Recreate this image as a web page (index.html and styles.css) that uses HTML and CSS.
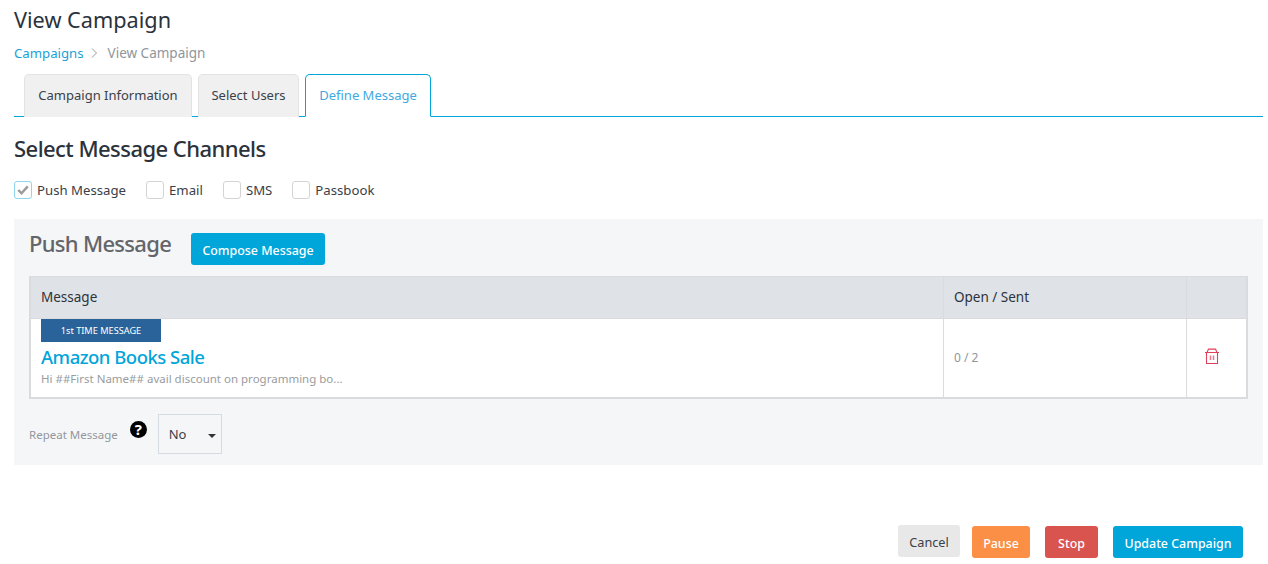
FILE: index.html
```html
<!DOCTYPE html>
<html lang="en">
<head>
<meta charset="utf-8">
<title>View Campaign</title>
<link rel="stylesheet" href="styles.css">
</head>
<body>
<div class="page">
  <h1 class="title">View Campaign</h1>
  <nav class="crumbs">
    <a class="crumb-link">Campaigns</a>
    <svg class="crumb-sep" width="7" height="10" viewBox="0 0 7 10"><path d="M1 .5 5.5 5 1 9.5" fill="none" stroke="#999" stroke-width="1"/></svg>
    <span class="crumb-current">View Campaign</span>
  </nav>
  <div class="tabs">
    <div class="tab tab-info">Campaign Information</div>
    <div class="tab tab-users">Select Users</div>
    <div class="tab tab-active">Define Message</div>
  </div>
  <h2 class="section-title">Select Message Channels</h2>
  <div class="channels">
    <label class="channel"><span class="box box-on"><svg width="12" height="10" viewBox="0 0 12 10"><path d="M1.2 5 4.5 8.2 10.8 1.4" fill="none" stroke="#9a9a9a" stroke-width="2.4"/></svg></span>Push Message</label>
    <label class="channel"><span class="box"></span>Email</label>
    <label class="channel"><span class="box"></span>SMS</label>
    <label class="channel"><span class="box"></span>Passbook</label>
  </div>
  <section class="panel">
    <div class="panel-head">
      <h3 class="panel-title">Push Message</h3>
      <button class="btn btn-blue btn-compose">Compose Message</button>
    </div>
    <div class="table">
      <div class="row row-head">
        <div class="cell c-msg">Message</div>
        <div class="cell c-open">Open / Sent</div>
        <div class="cell c-act"></div>
      </div>
      <div class="row row-body">
        <div class="cell c-msg">
          <span class="tag">1st TIME MESSAGE</span>
          <a class="msg-name">Amazon Books Sale</a>
          <p class="msg-text">Hi ##First Name## avail discount on programming bo...</p>
        </div>
        <div class="cell c-open count">0 / 2</div>
        <div class="cell c-act">
          <svg class="trash" width="16" height="16" viewBox="0 0 16 16" fill="none" stroke="#e0405a" stroke-width="1.1"><path d="M2.5 4.5h11v11h-11zM1 4.5h14M3 4.5 4.5 1.1h7L13 4.5"/><path d="M6.5 7.5v4.5M9.5 7.5v4.5" stroke-width="1.5" stroke="#e8788a"/></svg>
        </div>
      </div>
    </div>
    <div class="repeat">
      <span class="repeat-label">Repeat Message</span>
      <span class="help">?</span>
      <div class="select">No<span class="caret"></span></div>
    </div>
  </section>
  <footer class="actions">
    <button class="btn btn-grey">Cancel</button>
    <button class="btn btn-orange">Pause</button>
    <button class="btn btn-red">Stop</button>
    <button class="btn btn-blue btn-update">Update Campaign</button>
  </footer>
</div>
</body>
</html>
```
FILE: styles.css
```css
* { box-sizing: border-box; }
html, body { margin: 0; padding: 0; background: #fff; }
body { font-family: "Noto Sans", "Open Sans", sans-serif; color: #2b323b; height: 564px; overflow: hidden; }
.page { padding: 5px 5px 0 14px; }
.title { margin: 0; font-size: 21.7px; line-height: 29px; font-weight: 400; color: #2b323b; }
.crumbs { display: flex; align-items: center; margin-top: 9px; height: 20px; font-size: 13.2px; }
.crumb-link { color: #1b9fd8; }
.crumb-sep { margin: 0 10px 0 7px; }
.crumb-current { color: #8f969c; font-size: 13.5px; }
.tabs { display: flex; gap: 6px; margin-top: 11px; padding-left: 10px; height: 43px; border-bottom: 1px solid #00a5d9; }
.tab { height: 43px; padding-bottom: 2px; display: flex; align-items: center; justify-content: center; font-size: 13px; background: #f0f0f0; border: 1px solid #e3e3e3; border-bottom: 0; border-radius: 5px 5px 0 0; color: #3a4149; }
.tab-info { width: 168px; }
.tab-users { width: 101px; }
.tab-active { width: 126px; background: #fff; border: 1px solid #00a5d9; border-bottom: 1px solid #fff; color: #3fa9df; }
.section-title { margin: 17px 0 0; font-size: 22px; letter-spacing: -0.55px; line-height: 29px; font-weight: 500; color: #2b323b; }
.channels { display: flex; gap: 20px; margin-top: 17px; height: 20px; }
.channel { display: flex; align-items: center; gap: 5px; font-size: 13.2px; color: #3b4047; }
.box { width: 18px; height: 18px; border: 1px solid #d4d4d4; border-radius: 3px; display: flex; align-items: center; justify-content: center; background: #fff; }
.box-on { border-color: #8fd6ef; }
.panel { margin-top: 19px; height: 246px; background: #f5f6f8; padding: 9px 15px 0; }
.panel-head { display: flex; align-items: flex-start; gap: 20px; height: 38px; }
.panel-title { margin: 0; width: 142px; flex: none; white-space: nowrap; font-size: 22px; letter-spacing: -0.7px; line-height: 30px; font-weight: 500; color: #636569; }
.btn { border: 0; border-radius: 3px; height: 32px; padding: 2px 0 0; font: 500 12.4px "Noto Sans", "Open Sans", sans-serif; color: #fff; }
.btn-blue { background: #00a5da; }
.btn-compose { width: 134px; margin-top: 5px; }
.btn-update { width: 130px; margin-left: 3px; }
.btn-grey { width: 62px; background: #e8e8e8; color: #3a4149; font-weight: 400; font-size: 12.7px; position: relative; top: -1px; }
.btn-orange { width: 58px; background: #fb8f45; }
.btn-red { width: 53px; background: #d9534f; margin-left: 3px; }
.table { margin-top: 10px; border: 2px solid #d9dbde; border-top-width: 1px; background: #fff; }
.row { display: flex; }
.row-head { height: 42px; background: #dfe2e6; border-bottom: 1px solid #d8dadd; font-size: 13.5px; }
.row-head .cell { display: flex; align-items: center; padding-bottom: 2px; }
.row-body { height: 78px; }
.cell { border-right: 1px solid #d9dbde; padding: 0 10px; }
.c-msg { width: 913px; flex: none; }
.c-open { width: 243px; flex: none; }
.c-act { flex: 1; border-right: 0; display: flex; align-items: center; justify-content: center; padding: 0 9px 0 0; }
.trash { margin-bottom: 5px; }
.tag { display: block; width: 120px; height: 23px; background: #2a6399; color: #fff; font-size: 9.2px; line-height: 23px; text-align: center; }
.msg-name { display: block; font-size: 18.5px; letter-spacing: -0.5px; font-weight: 500; line-height: 24px; margin-top: 3px; color: #00a5da; }
.msg-text { margin: 2px 0 0; font-size: 11.5px; line-height: 16px; color: #999ca0; }
.count { display: flex; align-items: center; padding-bottom: 2px; font-size: 12px; color: #8f969c; }
.repeat { display: flex; align-items: center; margin-top: 15px; }
.repeat-label { font-size: 11.5px; color: #92979c; }
.help { width: 17px; height: 17px; margin: -10px 11px 0 12px; border-radius: 50%; background: #000; color: #fff; font-size: 15px; font-weight: 700; line-height: 17px; text-align: center; }
.select { position: relative; width: 64px; height: 40px; border: 1px solid #d5dbe2; padding-left: 10px; font-size: 13px; line-height: 38px; color: #3b4047; }
.caret { position: absolute; right: 5px; top: 19px; border: 4.5px solid transparent; border-top-color: #333; border-bottom: 0; }
.actions { display: flex; justify-content: flex-end; gap: 12px; margin-top: 61px; padding-right: 20px; }
```
